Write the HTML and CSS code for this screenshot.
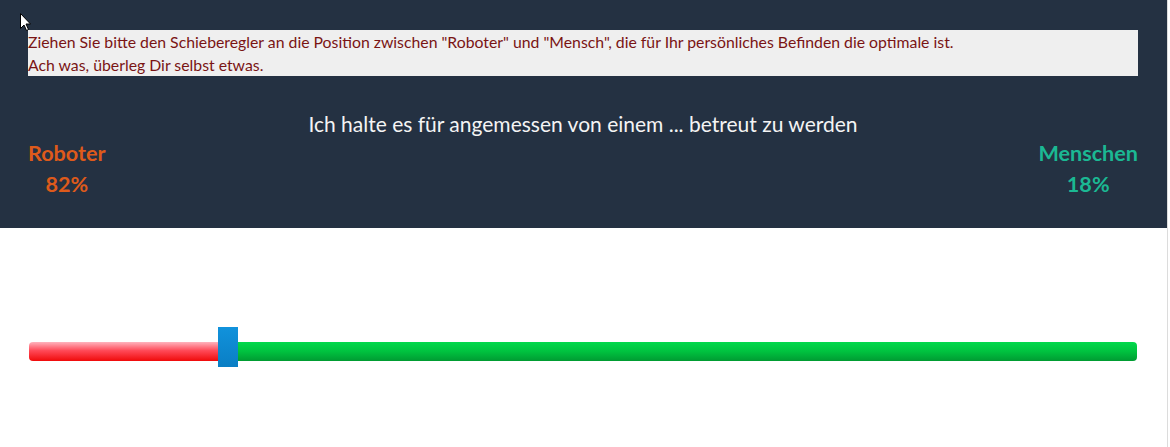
FILE: index.html
```html
<!DOCTYPE html>
<html lang="de">
<head>
<meta charset="utf-8">
<title>Roboter oder Mensch</title>
<link rel="stylesheet" href="styles.css">
</head>
<body>
<div class="page">
  <header class="panel">
    <div class="notice">
      <p>Ziehen Sie bitte den Schieberegler an die Position zwischen "Roboter" und "Mensch", die für Ihr persönliches Befinden die optimale ist.</p>
      <p>Ach was, überleg Dir selbst etwas.</p>
    </div>
    <h1 class="question">Ich halte es für angemessen von einem ... betreut zu werden</h1>
    <div class="scores">
      <div class="score robot">
        <div class="label">Roboter</div>
        <div class="value">82%</div>
      </div>
      <div class="score human">
        <div class="label">Menschen</div>
        <div class="value">18%</div>
      </div>
    </div>
  </header>
  <main class="slider-area">
    <div class="slider">
      <div class="track-red" style="width:17.06%"></div>
      <div class="handle"></div>
      <div class="track-green"></div>
    </div>
  </main>
</div>
<svg class="cursor" width="12" height="19" viewBox="0 0 12 19"><path d="M0.5 0.5 L0.5 15.5 L4 12 L6.5 17.5 L8.5 16.5 L6 11 L10.5 11 Z" fill="#fff" stroke="#000" stroke-width="1"/></svg>
</body>
</html>
```
FILE: styles.css
```css
html, body {
  margin: 0;
  padding: 0;
  background: #ffffff;
}
body {
  font-family: Lato, "Open Sans", sans-serif;
  position: relative;
}
.page {
  width: 1167px;
  height: 447px;
  border-right: 1px solid #dcdcdc;
  box-sizing: content-box;
}
.panel {
  background: #243142;
  height: 228px;
  padding: 30px 29px 0 28px;
  box-sizing: border-box;
}
.notice {
  background: #efefef;
  color: #7a1414;
  font-size: 15.8px;
  line-height: 23px;
  height: 46px;
}
.notice p {
  margin: 0;
  white-space: nowrap;
}
.question {
  margin: 28px 0 0 0;
  font-size: 21px;
  font-weight: 400;
  line-height: 40px;
  color: #f4f4f4;
  text-align: center;
  height: 34px;
}
.scores {
  display: flex;
  justify-content: space-between;
}
.score {
  font-size: 21.6px;
  font-weight: 700;
  line-height: 31px;
  text-align: center;
  display: flex;
  flex-direction: column;
  align-items: center;
}
.robot { color: #de5a1b; }
.human { color: #1bb893; }
.slider-area {
  padding: 99px 30px 0 29px;
}
.slider {
  display: flex;
  align-items: flex-start;
  height: 40px;
}
.track-red {
  margin-top: 15px;
  height: 19px;
  background: linear-gradient(#ffb3bd 0%, #ff4a58 45%, #f00a0a 100%);
  border-radius: 4px 0 0 4px;
  flex: none;
}
.handle {
  width: 20px;
  height: 40px;
  background: linear-gradient(#1192dc, #0a7ec4);
  flex: none;
}
.track-green {
  margin-top: 15px;
  flex: 1;
  height: 19px;
  background: linear-gradient(#02d94c 0%, #00c23f 50%, #009b32 100%);
  border-radius: 0 4px 4px 0;
}
.cursor {
  position: absolute;
  left: 20px;
  top: 13px;
}
```
